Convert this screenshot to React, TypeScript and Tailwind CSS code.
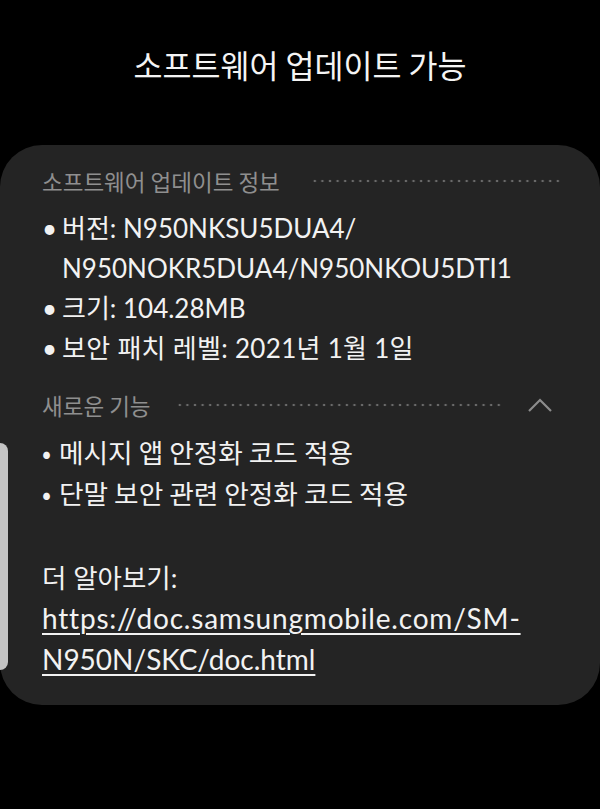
import React from "react";

const KR = { fontFamily: '"Noto Sans CJK KR", "Noto Sans", sans-serif' };
const MIX = { fontFamily: 'Lato, "Noto Sans CJK KR", sans-serif' };

function Dots({ className = "" }: { className?: string }) {
  return (
    <div
      className={
        "h-[4px] bg-[radial-gradient(circle,#6a6a6a_1.1px,transparent_1.6px)] bg-[length:7.6px_4px] bg-repeat-x " +
        className
      }
    />
  );
}

export default function App() {
  return (
    <div className="relative min-h-[809px] w-[600px] overflow-hidden bg-black" style={KR}>
      <div className="pt-[44px] text-center text-[31.5px] leading-[40px] text-[#f4f4f4]">
        소프트웨어 업데이트 가능
      </div>

      <div className="mt-[61px] rounded-[42px] bg-[#242424] pb-[25px] pl-[42px] pr-[40px] pt-[22px]">
        <div className="flex items-center">
          <span className="text-[22.5px] leading-[28px] text-[#8f8f8f]">소프트웨어 업데이트 정보</span>
          <Dots className="ml-[31px] flex-1" />
        </div>

        <div className="mt-[13px] text-[26px] leading-[40px] text-[#f2f2f2]" style={MIX}>
          <div className="flex">
            <span className="w-[20px]">•</span>
            <span>버전: N950NKSU5DUA4/</span>
          </div>
          <div className="pl-[20px]">N950NOKR5DUA4/N950NKOU5DTI1</div>
          <div className="flex">
            <span className="w-[20px]">•</span>
            <span>크기: 104.28MB</span>
          </div>
          <div className="flex">
            <span className="w-[20px]">•</span>
            <span className="tracking-[0.3px]">보안 패치 레벨: 2021년 1월 1일</span>
          </div>
        </div>

        <div className="mt-[23px] flex items-center">
          <span className="text-[22.5px] leading-[28px] text-[#8f8f8f]">새로운 기능</span>
          <Dots className="ml-[25px] mr-[25px] flex-1" />
          <svg width="24" height="14" viewBox="0 0 24 14" className="mr-[8px]">
            <path d="M1 13 L12 2 L23 13" fill="none" stroke="#8c8c8c" strokeWidth="2.2" />
          </svg>
        </div>

        <div className="mt-[12px] text-[26.7px] leading-[41px] text-[#f2f2f2]">
          <div className="flex">
            <span className="w-[17px]">•</span>
            <span>메시지 앱 안정화 코드 적용</span>
          </div>
          <div className="flex">
            <span className="w-[17px]">•</span>
            <span>단말 보안 관련 안정화 코드 적용</span>
          </div>
        </div>

        <div className="mt-[45px] text-[26.5px] leading-[40px] text-[#f2f2f2]" style={MIX}>
          더 알아보기:
        </div>
        <div className="text-[28px] leading-[41px] text-[#f2f2f2]" style={MIX}>
          <div className="whitespace-nowrap tracking-[0.8px]">
            <span className="underline decoration-[1.5px] underline-offset-[4px]">https://doc.samsungmobile.com/SM-</span>
          </div>
          <div className="whitespace-nowrap">
            <span className="underline decoration-[1.5px] underline-offset-[4px]">N950N/SKC/doc.html</span>
          </div>
        </div>
      </div>

      <div className="absolute left-0 top-[443px] h-[227px] w-[8px] rounded-r-[8px] bg-[#c4c4c4]" />
    </div>
  );
}
